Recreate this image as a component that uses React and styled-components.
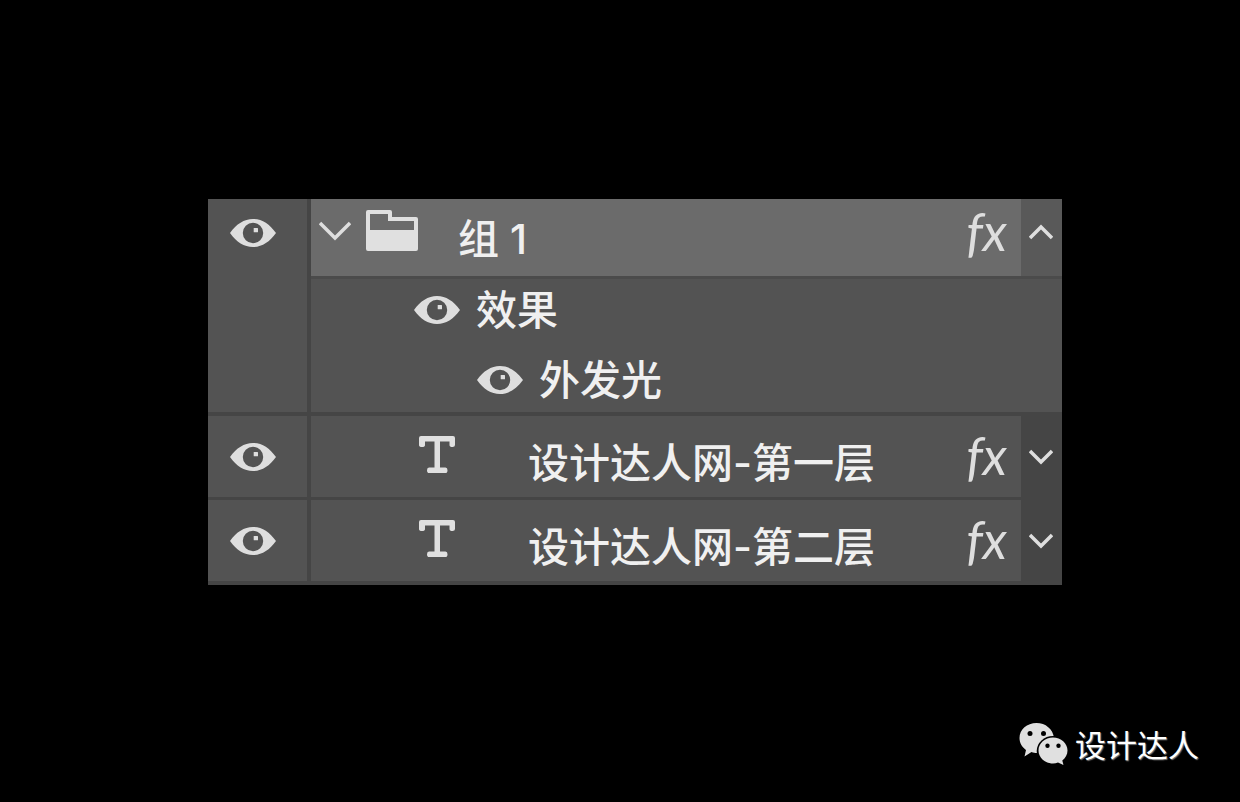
import React, { useState } from 'react';
import styled, { createGlobalStyle } from 'styled-components';

const GlobalStyle = createGlobalStyle`
  * { box-sizing: border-box; }
  body {
    margin: 0;
    background: #000;
    font-family: Inter, "Noto Sans CJK SC", sans-serif;
  }
`;

const Page = styled.main`
  min-height: 100vh;
  display: flex;
  flex-direction: column;
  justify-content: space-between;
  padding: 199px 0 33px;
`;

const Panel = styled.ul`
  list-style: none;
  margin: 0 178px 0 208px;
  padding: 0 0 4px;
  display: flex;
  flex-direction: column;
  gap: 3px;
  background: #454545;
`;

const Layer = styled.li`
  display: grid;
  grid-template-columns: 103px 1fr 41px;
`;

const VisibilityCell = styled.div`
  grid-row: span ${(p) => (p.$group ? 2 : 1)};
  display: flex;
  align-items: flex-start;
  justify-content: center;
  padding: ${(p) => (p.$group ? '20px' : '27px')} 9px 0 0;
  background: #535353;
  border-right: 4px solid #454545;
`;

const IconButton = styled.button`
  display: flex;
  padding: 0;
  border: 0;
  background: none;
  color: #dedede;
  cursor: pointer;
`;

const Body = styled.div`
  display: flex;
  align-items: center;
  height: ${(p) => (p.$selected ? '77px' : '81px')};
  padding: 0 14px ${(p) => (p.$selected ? '14px' : '4px')} ${(p) => (p.$selected ? '8px' : '108px')};
  background: ${(p) => (p.$selected ? '#6b6b6b' : '#535353')};
  color: #e0e0e0;
`;

const Thumb = styled.span`
  display: flex;
  margin: 0 ${(p) => (p.$wide ? '73px' : '40px')} 0 ${(p) => (p.$wide ? '0' : '15px')};
`;

const Name = styled.span`
  flex: 1;
  padding-top: 17px;
  font-size: 41px;
  font-weight: 500;
  line-height: 48px;
  white-space: nowrap;
  color: #f0f0f0;
`;

const Fx = styled.span`
  font-family: Lato, "Open Sans", sans-serif;
  font-size: 52px;
  font-style: italic;
  font-weight: 400;
  line-height: 60px;
  color: #dedede;
`;

const ToggleCell = styled.div`
  display: flex;
  align-items: center;
  justify-content: center;
  padding: 0 2px ${(p) => (p.$selected ? '12px' : '0')} 0;
  background: ${(p) => (p.$selected ? '#595959' : '#454545')};
`;

const Effects = styled.div`
  grid-column: 2 / -1;
  display: flex;
  flex-direction: column;
  gap: 8px;
  height: 136px;
  padding-left: 103px;
  border-top: 3px solid #4b4b4b;
  background: #535353;
`;

const GroupLayer = styled(Layer)`
  padding-bottom: 1px;
`;

const Effect = styled.div`
  display: flex;
  align-items: center;
  gap: 16px;
  height: 62px;
  padding-left: ${(p) => (p.$nested ? '63px' : '0')};
  font-size: 41px;
  font-weight: 500;
  line-height: 48px;
  color: #f0f0f0;
`;

const Credit = styled.footer`
  display: flex;
  align-items: center;
  justify-content: flex-end;
  gap: 6px;
  padding-right: 41px;
  color: #fff;
  font-size: 31px;
  line-height: 46px;
  text-shadow: 1px 1px 1px #777;
`;

const CreditName = styled.span`
  padding-top: 2px;
`;

function Eye() {
  return (
    <svg width="46" height="28" viewBox="0 0 46 28" aria-hidden="true">
      <path
        fill="currentColor"
        fillRule="evenodd"
        d="M0 14C6.500 5 14 0 23 0S39.500 5 46 14C39.500 23 32 28 23 28S6.500 23 0 14ZM23 3.800a10.200 10.200 0 1 0 0 20.400a10.200 10.200 0 1 0 0-20.400Z"
      />
      <rect x="23.700" y="9" width="4.300" height="4.300" rx="0.500" fill="currentColor" />
    </svg>
  );
}

function Chevron({ up, large }) {
  return (
    <svg
      width={large ? 32 : 24}
      height={large ? 20 : 16}
      viewBox={large ? '0 0 32 20' : '0 0 24 16'}
      fill="none"
      stroke="currentColor"
      strokeWidth="3.500"
      aria-hidden="true"
    >
      <path d={large ? 'M1 2L16 17L31 2' : up ? 'M1 14L12 3L23 14' : 'M1 2L12 13L23 2'} />
    </svg>
  );
}

function Folder() {
  return (
    <svg width="52" height="41" viewBox="0 0 52 41" aria-hidden="true">
      <path
        fill="currentColor"
        fillRule="evenodd"
        d="M2 0H24Q26 0 26 2V7H50Q52 7 52 9V39Q52 41 50 41H2Q0 41 0 39V2Q0 0 2 0ZM4 4V20H48V11H22V4Z"
      />
    </svg>
  );
}

function TypeGlyph() {
  return (
    <svg width="36" height="37" viewBox="0 0 36 37" aria-hidden="true">
      <path
        fill="currentColor"
        d="M2 0H34Q36 0 36 2V9Q36 11 33.500 11Q30.500 11 30.500 9V5.500H21V31.500H26.500Q28.500 31.500 28.500 34.200Q28.500 37 26.500 37H10Q8 37 8 34.200Q8 31.500 10 31.500H15.500V5.500H6V9Q6 11 3 11Q0 11 0 9V2Q0 0 2 0Z"
      />
    </svg>
  );
}

function WeChat() {
  return (
    <svg width="50" height="44" viewBox="0 0 50 44" aria-hidden="true">
      <path
        fill="#e0e0e0"
        d="M17.500 0C8 0 0.500 6.500 0.500 15C0.500 20 3 24 7 27L5.500 33.500L12.500 29C15 30 17 30.200 19.500 30L35 15C34 6 26.500 0 17.500 0Z"
      />
      <ellipse cx="34" cy="28" rx="16.300" ry="15" fill="#000" />
      <path
        fill="#e0e0e0"
        d="M34 14.500C42 14.500 48.500 20.300 48.500 27.500C48.500 31.500 46.500 35 43.300 37.400L44.500 42L39 39.600C37.500 40.200 35.700 40.500 34 40.500C26 40.500 19.500 34.700 19.500 27.500C19.500 20.300 26 14.500 34 14.500Z"
      />
      <g fill="#000">
        <circle cx="11" cy="10.500" r="2.500" />
        <circle cx="24.500" cy="10.500" r="2.500" />
        <circle cx="28.500" cy="22.700" r="2.200" />
        <circle cx="39.500" cy="22.700" r="2.200" />
      </g>
    </svg>
  );
}

function EyeButton({ label }) {
  const [visible, setVisible] = useState(true);
  return (
    <IconButton
      type="button"
      aria-label={`显示 ${label}`}
      aria-pressed={visible}
      onClick={() => setVisible(!visible)}
    >
      <Eye />
    </IconButton>
  );
}

function TextLayer({ name }) {
  return (
    <Layer>
      <VisibilityCell>
        <EyeButton label={name} />
      </VisibilityCell>
      <Body>
        <Thumb $wide>
          <TypeGlyph />
        </Thumb>
        <Name>{name}</Name>
        <Fx>fx</Fx>
      </Body>
      <ToggleCell>
        <IconButton type="button" aria-label="展开效果">
          <Chevron />
        </IconButton>
      </ToggleCell>
    </Layer>
  );
}

export default function App() {
  return (
    <Page>
      <GlobalStyle />
      <Panel>
        <GroupLayer>
          <VisibilityCell $group>
            <EyeButton label="组 1" />
          </VisibilityCell>
          <Body $selected>
            <IconButton type="button" aria-label="折叠组">
              <Chevron large />
            </IconButton>
            <Thumb>
              <Folder />
            </Thumb>
            <Name>组 1</Name>
            <Fx>fx</Fx>
          </Body>
          <ToggleCell $selected>
            <IconButton type="button" aria-label="收起效果">
              <Chevron up />
            </IconButton>
          </ToggleCell>
          <Effects>
            <Effect>
              <EyeButton label="效果" />
              效果
            </Effect>
            <Effect $nested>
              <EyeButton label="外发光" />
              外发光
            </Effect>
          </Effects>
        </GroupLayer>
        <TextLayer name="设计达人网-第一层" />
        <TextLayer name="设计达人网-第二层" />
      </Panel>
      <Credit>
        <WeChat />
        <CreditName>设计达人</CreditName>
      </Credit>
    </Page>
  );
}
